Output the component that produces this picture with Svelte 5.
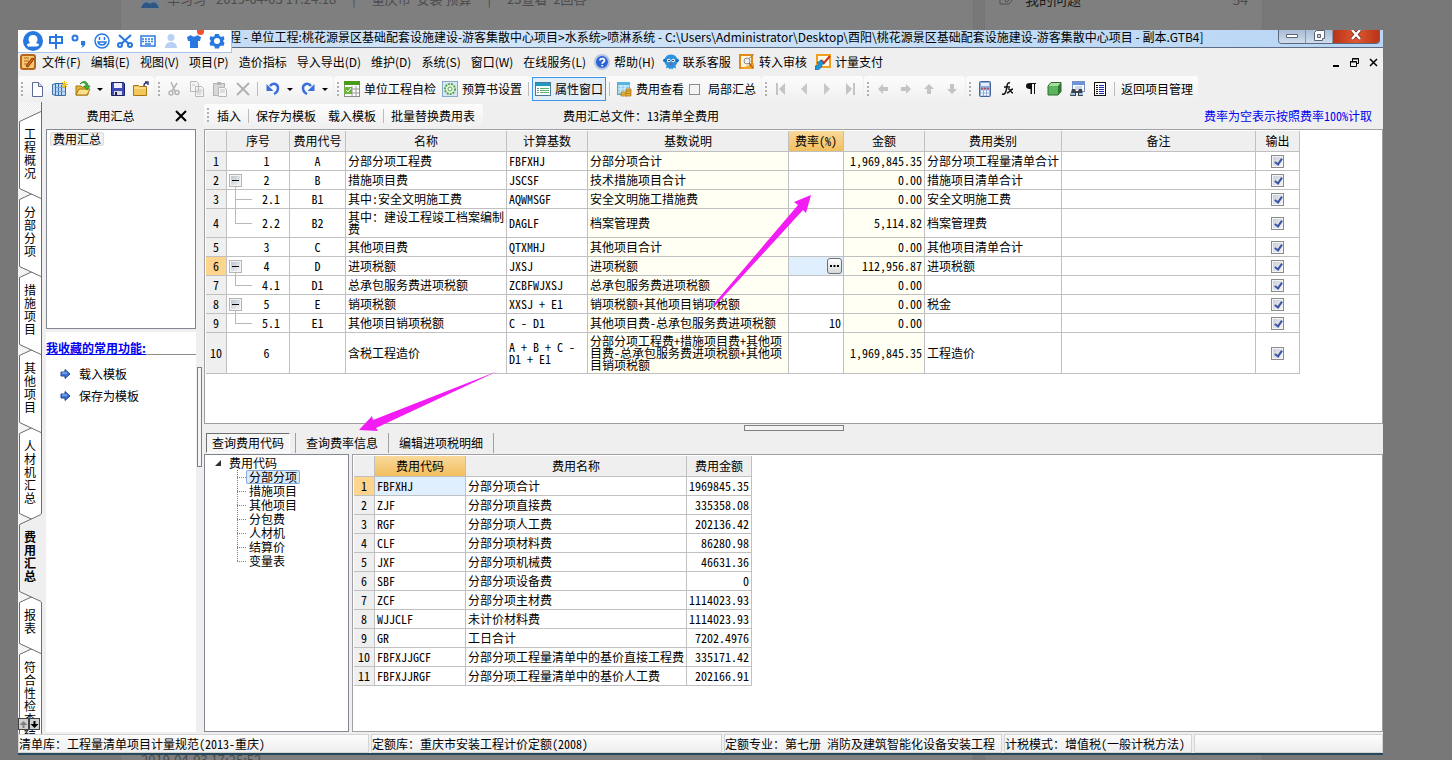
<script lang="ts">
  type Tool = { icon?: string, text?: string, sep?: boolean, caret?: boolean, check?: boolean, active?: boolean, label?: string }

  const icons: Record<string, string> = {
    app: '<rect x="1" y="1" width="14" height="14" rx="2" fill="#f7c873" stroke="#b5651d" stroke-width="2"/><path d="M4 4h5M4 7h5M4 10h4" stroke="#b5651d"/><path d="M6 12 12 4l2 1-6 8z" fill="#e06a10" stroke="#7a3a08"/>',
    help: '<circle cx="8" cy="8" r="7" fill="#2a62d8" stroke="#b8c6e0" stroke-width="2"/><path d="M6 6.500C6 4 10.500 4 10.500 6.500 10.500 8 8.200 8 8.200 9.800M8.200 11v1.600" stroke="#fff" stroke-width="1.800" fill="none"/>',
    service: '<path d="M8 .5c4.500 0 6.500 3 6.500 6.500 0 2-1 3.500-2 4.500l.5 3-2-1-2 2-1-1.500-1 1.500-2-2-2 1 .5-3c-1-1-2-2.500-2-4.500C1.500 3.500 3.500.5 8 .5z" fill="#2b93e0"/><circle cx="1.800" cy="6.500" r="1.800" fill="#1c74c0"/><circle cx="14.200" cy="6.500" r="1.800" fill="#1c74c0"/><circle cx="5.800" cy="6.500" r="1.800" fill="#fff"/><circle cx="10.200" cy="6.500" r="1.800" fill="#fff"/><circle cx="6" cy="6.500" r=".8"/><circle cx="10" cy="6.500" r=".8"/><path d="M6.500 10h3" stroke="#d33"/>',
    audit: '<rect x="1" y="1" width="12" height="13" fill="#fff6dd" stroke="#e08a1a" stroke-width="2"/><path d="M1 15h14V9z" fill="#f5a623"/><circle cx="8" cy="7" r="3" fill="#e9f2fa" stroke="#8a8a8a"/><path d="m10 9 4 5" stroke="#b5651d" stroke-width="2"/><path d="m9 5 6-4.500" stroke="#888"/>',
    pay: '<rect x="2" y="1" width="13" height="12" fill="#fffbe8" stroke="#f0a020" stroke-width="2"/><path d="m15 2-6 7-3-3" stroke="#c8321e" stroke-width="2" fill="none"/><path d="M0 12c2 0 4-1 4-3H2l4-3 3 4H7c0 4-3 6-7 6z" fill="#1a9be0" stroke="#0c5c94" stroke-width=".7"/>',
    file: '<path d="M3.500 1.500h6l4 4v10h-10z" fill="#fff" stroke="#5a6c94"/><path d="M9.500 1.500v4h4" fill="#d4def0" stroke="#5a6c94"/>',
    book: '<path d="M.5 3.500 3.500 2.500v12l-3-1zM3.500 2.500h10v12h-10z" fill="#bcd8f4" stroke="#3a6ea8"/><path d="M6.500 3v11M9.500 3v11" stroke="#3a6ea8"/><path d="M4 6.500h9M4 10.500h9" stroke="#7ca8d8"/><path d="M12.500 0v7M9 3.500h7M10 1l5 5M15 1l-5 5" stroke="#f2c21a"/>',
    open: '<path d="M1 5h5l1 1h6v8H1z" fill="#e8b83a" stroke="#a87410"/><path d="M1 14 4 8h11l-3 6z" fill="#fbe08a" stroke="#a87410"/><path d="M5 3c4-3 6 0 6 2H9l3 4 3-4h-2c0-5-5-6-8-2z" fill="#3cba34" stroke="#1b7a18" stroke-width=".7"/>',
    save: '<path d="M1.500 1.500h12l1 1v12h-13z" fill="#3c4cb4" stroke="#1c2468"/><path d="M4 2h8v5H4z" fill="#eef"/><path d="M4 10h8v4H4z" fill="#d8dcec"/><path d="M5 11h2v3H5z" fill="#223"/>',
    folder: '<path d="M.5 4.500h5l1 1h7v9H.5z" fill="#f3c85a" stroke="#a87410"/><path d="M1 7h12" stroke="#fdf0bc"/><path d="M11 5c0-3 1-3 3-3m-2-1h3v3" stroke="#333c70" stroke-width="1.500" fill="none"/>',
    cut: '<path d="m5 1 4 9M11 2 6 10" stroke="#b4b4b4" stroke-width="1.500"/><circle cx="5" cy="12" r="2" fill="none" stroke="#b4b4b4" stroke-width="1.500"/><circle cx="11" cy="11.500" r="2" fill="none" stroke="#b4b4b4" stroke-width="1.500"/>',
    copy: '<path d="M1.500.5h6l2 2v8h-8zM6.500 5.500h6l2 2v8h-8z" fill="#f4f4f4" stroke="#b8b8b8"/><path d="M8 9h5M8 11h5M8 13h4M3 4h3" stroke="#c4c4c4"/>',
    paste: '<rect x="1.500" y="2.500" width="11" height="12" fill="#d8d8d8" stroke="#b4b4b4"/><path d="M5 1h4v3H5z" fill="#b4b4b4"/><path d="M6.500 6.500h6l2 2v7h-8z" fill="#f6f6f6" stroke="#b8b8b8"/><path d="M8 9h5M8 11h5" stroke="#c4c4c4"/>',
    del: '<path d="m2 2 12 12M14 2 2 14" stroke="#b0b0b0" stroke-width="1.800"/>',
    undo: '<path d="M5 5c3-4 8-2 8 2 0 3-2 5-4 6" fill="none" stroke="#3c6edc" stroke-width="2.500"/><path d="M1.500 3v7h7z" fill="#3c6edc"/>',
    redo: '<path d="M11 5C8 1 3 3 3 7c0 3 2 5 4 6" fill="none" stroke="#3c6edc" stroke-width="2.500"/><path d="M14.500 3v7h-7z" fill="#3c6edc"/>',
    check: '<rect x=".5" y=".5" width="15" height="15" fill="#fff" stroke="#8a8a8a"/><path d="M0 0h16v4H0z" fill="#4a9a1c"/><path d="M1 8h14M1 12h14M8 5v10M12 5v10" stroke="#999"/><path d="M0 6h8v7H0z" fill="#6cb43c"/><path d="m2 9 2 2 3-4" stroke="#fff" fill="none"/>',
    gear: '<rect x=".5" y=".5" width="15" height="15" fill="#d8e8f8" stroke="#88a8cc"/><circle cx="8" cy="8" r="5" fill="#e8f6e4" stroke="#58a84c" stroke-width="2" stroke-dasharray="2 1"/><circle cx="8" cy="8" r="2" fill="#fff" stroke="#58a84c"/>',
    prop: '<rect x=".5" y="1.500" width="15" height="13" fill="#fff" stroke="#4a7a94"/><path d="M1 2h14v3H1z" fill="#1c9cc4"/><path d="M2 7.500h2M2 9.500h2M2 11.500h2" stroke="#888"/><path d="M5 7.500h9M5 9.500h9M5 11.500h9" stroke="#58b46c"/>',
    view: '<rect x="1.500" y="1.500" width="12" height="12" fill="#8cccec" stroke="#58a4d0"/><path d="M2 5h12M2 8h12M2 11h12M5 1v12M9 1v12" stroke="#e4f4fc"/><path d="M1 1h13v3H1z" fill="#58b4e0"/><path d="M5 11h6v4H5z" fill="#f4c44c" stroke="#a87410" stroke-width=".7"/><path d="M10 8h5v7h-5z" fill="#e8b03c" stroke="#a87410" stroke-width=".7"/><path d="M10 10h5M10 12.500h5M5 13h5" stroke="#a87410" stroke-width=".7"/>',
    first: '<path d="M3 2h2v12H3zM12 2v12L6 8z" fill="#c4c4c4"/>',
    prev: '<path d="M11 2v12L5 8z" fill="#c8c8c8"/>',
    next: '<path d="M5 2v12l6-6z" fill="#c8c8c8"/>',
    last: '<path d="M11 2h2v12h-2zM4 2v12l6-6z" fill="#c4c4c4"/>',
    left: '<path d="m3 8 5-5v3h5v4H8v3z" fill="#c4c4c4"/>',
    right: '<path d="M13 8 8 3v3H3v4h5v3z" fill="#c4c4c4"/>',
    up: '<path d="m8 3 5 5h-3v5H6V8H3z" fill="#c4c4c4"/>',
    down: '<path d="M8 13 3 8h3V3h4v5h3z" fill="#c4c4c4"/>',
    calc: '<rect x="2.500" y=".5" width="11" height="15" rx="1" fill="#8cacdc" stroke="#4464a0"/><path d="M4 2h8v3H4z" fill="#e4eefa"/><path d="M4 7.500h8" stroke="#d04040" stroke-width="1.500" stroke-dasharray="2 1"/><path d="M4 10.500h8M4 13.500h8" stroke="#fff" stroke-width="2" stroke-dasharray="2 1"/>',
    fx: '<path d="M10 2C7 1 7 5 6.500 8S5 14 2 13M4 6h6M8 8c3-1 2 4 5 4M13 8c-2 0-4 4-6 4" fill="none" stroke="#111" stroke-width="1.500"/>',
    para: '<path d="M3 5c0-2 1-3 4-3h6v1h-1v10h-1V3H9v10H7.500V8C4 8 3 7 3 5z" fill="#111"/>',
    cube: '<path d="m2 5 3-3.500h10L12 5z" fill="#a8dca0"/><path d="M12 5 15 1.500v9L12 14z" fill="#2c7c30"/><path d="M2 5h10v9H2z" fill="#5cb45c"/><path d="m2 5 3-3.500h10v9L12 14H2z" fill="none" stroke="#2c6c30"/>',
    find: '<rect x="3.500" y=".5" width="12" height="10" fill="#fff" stroke="#7c94c4"/><path d="M3 1h13v3H3z" fill="#6c94dc"/><path d="M6 6h7M6 8h7" stroke="#9cb4dc"/><path d="M3 8h3l1 2h2l1-2h3l1 7h-5v-3H7v3H1z" fill="#3c444c"/><path d="M2 13h4M10 13h4" stroke="#9cc4ec" stroke-width="2"/>',
    list: '<rect x="2.500" y="1.500" width="11" height="13" fill="#fff" stroke="#111"/><path d="M4 4.500h2M4 6.500h2M4 8.500h2M4 10.500h2M4 12.500h2" stroke="#111"/><path d="M7 4.500h5M7 6.500h5M7 8.500h5M7 10.500h5M7 12.500h5" stroke="#1c24b4"/>',
    go: '<path d="M3 6h4V3.500L12 8l-5 4.500V10H3z" fill="#3c74dc" stroke="#1c4494"/><path d="M4 7h5" stroke="#a4c8f8"/>'
  }

  const ime: Record<string, string> = {
    账号: '<circle cx="10" cy="10" r="10" fill="#2878e0"/><path d="M10 4c3 0 4.500 2 4.500 4.500 0 1.500-.5 2-1.500 3.500 2 .5 3 1 3 2 0 1.500-3 1.500-6 1.500s-6 0-6-1.500c0-1 1-1.500 3-2-1-1.500-1.500-2-1.500-3.500C5.500 6 7 4 10 4z" fill="#fff"/>',
    中英: '<path d="M4 6h12v6H4zM10 3v15" fill="none" stroke="#2878e0" stroke-width="2"/>',
    标点: '<circle cx="6" cy="7" r="2.500" fill="none" stroke="#2878e0" stroke-width="2"/><path d="M12 10h4c1 4-1 6-4 7 1-1 2-2 1-3h-1z" fill="#2878e0"/>',
    表情: '<circle cx="10" cy="10" r="7" fill="none" stroke="#2878e0" stroke-width="1.500"/><path d="M6 11c1 4 7 4 8 0zM7.500 6v3M12.500 6v3" fill="none" stroke="#2878e0" stroke-width="1.500"/>',
    截图: '<path d="m4 4 10 9M16 4 6 13" stroke="#2878e0" stroke-width="2"/><circle cx="5" cy="14" r="2" fill="none" stroke="#2878e0" stroke-width="2"/><circle cx="15" cy="14" r="2" fill="none" stroke="#2878e0" stroke-width="2"/>',
    键盘: '<rect x="3" y="5" width="14" height="10" fill="none" stroke="#2878e0" stroke-width="1.500"/><path d="M4 8h12M4 10.500h12" stroke="#2878e0" stroke-width="1.500" stroke-dasharray="2 1"/><path d="M7 13h6" stroke="#2878e0" stroke-width="1.500"/>',
    用户: '<circle cx="10" cy="6.500" r="3.500" fill="#b8d0f4"/><path d="M4 17c0-8 12-8 12 0z" fill="#b8d0f4"/>',
    皮肤: '<path d="M3 6 7 4c1 2 5 2 6 0l4 2-1 4h-2v7H6v-7H4z" fill="#2878e0"/>',
    设置: '<path d="M8 3h4l.5 2 2 1 2-1 1 3-1.500 2L17.500 12l-1 3-2-.5-2 1-.5 2H8l-.5-2-2-1-2 .5-1-3L4 10 2.500 8l1-3 2 1 2-1z" fill="#2878e0"/><circle cx="10" cy="10" r="3" fill="#fff"/>'
  }

  const menus = ['文件(F)', '编辑(E)', '视图(V)', '项目(P)', '造价指标', '导入导出(D)', '维护(D)', '系统(S)', '窗口(W)', '在线服务(L)']
  const iconMenus = [['help', '帮助(H)'], ['service', '联系客服'], ['audit', '转入审核'], ['pay', '计量支付']]

  const toolGroups: Tool[][] = [
    [{ icon: 'file', label: '新建' }, { icon: 'book', label: '新建工程' }, { icon: 'open', label: '打开', caret: true }, { icon: 'save', label: '保存' }, { icon: 'folder', label: '另存为' }],
    [{ icon: 'cut', label: '剪切' }, { icon: 'copy', label: '复制' }, { icon: 'paste', label: '粘贴' }, { icon: 'del', label: '删除' }, { sep: true }, { icon: 'undo', label: '撤销', caret: true }, { icon: 'redo', label: '恢复', caret: true }],
    [{ icon: 'check', text: '单位工程自检' }, { icon: 'gear', text: '预算书设置' }, { sep: true }, { icon: 'prop', text: '属性窗口', active: true }, { sep: true }, { icon: 'view', text: '费用查看' }, { check: true, text: '局部汇总' }],
    [{ icon: 'first', label: '首条' }, { icon: 'prev', label: '上一条' }, { icon: 'next', label: '下一条' }, { icon: 'last', label: '末条' }],
    [{ icon: 'left', label: '左移' }, { icon: 'right', label: '右移' }, { icon: 'up', label: '上移' }, { icon: 'down', label: '下移' }],
    [{ icon: 'calc', label: '计算器' }, { icon: 'fx', label: '函数' }, { icon: 'para', label: '特殊符号' }, { icon: 'cube', label: '图元' }, { icon: 'find', label: '查找' }, { icon: 'list', label: '列表' }, { sep: true }, { text: '返回项目管理' }]
  ]

  const sideTabs = ['工程概况', '分部分项', '措施项目', '其他项目', '人材机汇总', '费用汇总', '报表', '符合性检查结果']
  const activeTab = 5
  const tabHeight = (name: string) => 36 + 13 * name.length

  // tree: 'open' has a toggle, 'mid' and 'end' are its children
  const fees = [
    { no: '1', code: 'A', name: '分部分项工程费', base: 'FBFXHJ', desc: '分部分项合计', rate: '', sum: '1,969,845.35', kind: '分部分项工程量清单合计', tree: '', h: 19 },
    { no: '2', code: 'B', name: '措施项目费', base: 'JSCSF', desc: '技术措施项目合计', rate: '', sum: '0.00', kind: '措施项目清单合计', tree: 'open', h: 19 },
    { no: '2.1', code: 'B1', name: '其中:安全文明施工费', base: 'AQWMSGF', desc: '安全文明施工措施费', rate: '', sum: '0.00', kind: '安全文明施工费', tree: 'mid', h: 19 },
    { no: '2.2', code: 'B2', name: '其中：建设工程竣工档案编制费', base: 'DAGLF', desc: '档案管理费', rate: '', sum: '5,114.82', kind: '档案管理费', tree: 'end', h: 29 },
    { no: '3', code: 'C', name: '其他项目费', base: 'QTXMHJ', desc: '其他项目合计', rate: '', sum: '0.00', kind: '其他项目清单合计', tree: '', h: 19 },
    { no: '4', code: 'D', name: '进项税额', base: 'JXSJ', desc: '进项税额', rate: '', sum: '112,956.87', kind: '进项税额', tree: 'open', h: 19 },
    { no: '4.1', code: 'D1', name: '总承包服务费进项税额', base: 'ZCBFWJXSJ', desc: '总承包服务费进项税额', rate: '', sum: '0.00', kind: '', tree: 'end', h: 19 },
    { no: '5', code: 'E', name: '销项税额', base: 'XXSJ + E1', desc: '销项税额+其他项目销项税额', rate: '', sum: '0.00', kind: '税金', tree: 'open', h: 19 },
    { no: '5.1', code: 'E1', name: '其他项目销项税额', base: 'C - D1', desc: '其他项目费-总承包服务费进项税额', rate: '10', sum: '0.00', kind: '', tree: 'end', h: 19 },
    { no: '6', code: '', name: '含税工程造价', base: 'A + B + C - D1 + E1', desc: '分部分项工程费+措施项目费+其他项目费-总承包服务费进项税额+其他项目销项税额', rate: '', sum: '1,969,845.35', kind: '工程造价', tree: '', h: 41 }
  ]
  const current = 5

  const queryTabs = ['查询费用代码', '查询费率信息', '编辑进项税明细']
  const codeTree = ['分部分项', '措施项目', '其他项目', '分包费', '人材机', '结算价', '变量表']

  const codes = [
    ['FBFXHJ', '分部分项合计', '1969845.35'],
    ['ZJF', '分部分项直接费', '335358.08'],
    ['RGF', '分部分项人工费', '202136.42'],
    ['CLF', '分部分项材料费', '86280.98'],
    ['JXF', '分部分项机械费', '46631.36'],
    ['SBF', '分部分项设备费', '0'],
    ['ZCF', '分部分项主材费', '1114023.93'],
    ['WJJCLF', '未计价材料费', '1114023.93'],
    ['GR', '工日合计', '7202.4976'],
    ['FBFXJJGCF', '分部分项工程量清单中的基价直接工程费', '335171.42'],
    ['FBFXJJRGF', '分部分项工程量清单中的基价人工费', '202166.91']
  ]
</script>

{#snippet icon(name: string)}
  <svg width="16" height="16" viewBox="0 0 16 16" aria-hidden="true">{@html icons[name]}</svg>
{/snippet}

<div class="screen">
  <div class="backdrop">
    <div class="post">
      <div class="meta">
        <svg width="18" height="18" viewBox="0 0 18 18" aria-hidden="true"><path d="M0 0h18v18H0z" fill="#70808c" /><path d="M0 17c2-5 5-7 9-4 4-3 7-1 9 4z" fill="#2c5684" /></svg>
        <span class="who">华习习</span><span class="when">2019-04-03 17:24:18</span><span class="bar">|</span>
        <span>重庆市&nbsp; 安装 预算</span><span class="bar">|</span><span>23查看&nbsp; 2回答</span>
      </div>
      <div class="later">2019-04-03 17:25:52</div>
    </div>
    <div class="mine">
      <svg width="16" height="16" viewBox="0 0 16 16" aria-hidden="true"><path d="M1 2v11h9l4-5M6 10l7-8 2 2-7 7z" fill="none" stroke="#4c5054" /></svg>
      <span>我的问题</span><span class="count">54</span>
    </div>
  </div>

  <div class="window">
    <header class="titlebar">
      <span class="caption">程 - 单位工程:桃花源景区基础配套设施建设-游客集散中心项目&gt;水系统&gt;喷淋系统 - C:\Users\Administrator\Desktop\酉阳\桃花源景区基础配套设施建设-游客集散中心项目 - 副本.GTB4]</span>
      <div class="winbtns">
        <button aria-label="最小化"><svg width="14" height="10" viewBox="0 0 14 10"><path d="M1.500 4.500h11v3h-11z" fill="#fff" stroke="#5c6474" /></svg></button>
        <button aria-label="还原"><svg width="14" height="12" viewBox="0 0 14 12"><path d="M4.500.5h8v8h-2v2h-8v-8z" fill="#fff" stroke="#5c6474" /><path d="M5.500 4.500h3v3h-3z" fill="#c4d4e4" stroke="#5c6474" /></svg></button>
        <button class="close" aria-label="关闭"><svg width="14" height="12" viewBox="0 0 14 12"><path d="m3 0 8 9M11 0 3 9" stroke="#6c2c24" stroke-width="4" /><path d="m3 0 8 9M11 0 3 9" stroke="#fff" stroke-width="2.500" /></svg></button>
      </div>
    </header>

    <div class="ime">
      {#each Object.entries(ime) as [name, shape]}
        <button aria-label={name}>
          <svg width="20" height="20" viewBox="0 0 20 20">{@html shape}</svg>
          {#if name === '皮肤'}<i class="dot"></i>{/if}
        </button>
      {/each}
    </div>

    <nav class="menubar">
      {@render icon('app')}
      {#each menus as menu}
        <button>{menu}</button>
      {/each}
      {#each iconMenus as [name, text]}
        <button class="pic">{@render icon(name)}{text}</button>
      {/each}
      <div class="mdi">
        <button aria-label="最小化子窗口"><svg width="11" height="11" viewBox="0 0 11 11"><path d="M3 9h6" stroke="#000" stroke-width="2" /></svg></button>
        <button aria-label="还原子窗口"><svg width="11" height="11" viewBox="0 0 11 11"><path d="M3.500 4V1.500h6v5H7M3 2h7M1.500 4.500h6v5h-6zM1 5h7" fill="none" stroke="#000" /></svg></button>
        <button aria-label="关闭子窗口"><svg width="11" height="11" viewBox="0 0 11 11"><path d="m2 2 7 7M9 2 2 9" stroke="#000" stroke-width="1.500" /></svg></button>
      </div>
    </nav>

    <div class="toolbar">
      {#each toolGroups as group}
        <div class="group">
          <i class="grip"></i>
          {#each group as tool}
            {#if tool.sep}
              <i class="sep"></i>
            {:else if tool.check}
              <label class="partial"><input type="checkbox">{tool.text}</label>
            {:else}
              <button class:square={!tool.text} class:active={tool.active} aria-label={tool.label}>
                {#if tool.icon}{@render icon(tool.icon)}{/if}{tool.text ?? ''}
              </button>
              {#if tool.caret}<button class="caret" aria-label="{tool.label}选项"></button>{/if}
            {/if}
          {/each}
        </div>
      {/each}
    </div>

    <main>
      <nav class="side">
        {#each sideTabs as tab, i}
          {@const h = tabHeight(tab)}
          <button class="tab" class:active={i === activeTab} style="height: {h}px; z-index: {i === activeTab ? 20 : 10 - i}">
            <svg width="24" height={h} aria-hidden="true">
              <path d="M23 .5 1.500 10.500v{h - 21}L23 {h - .5}z" fill={i === activeTab ? '#efefef' : '#fff'} stroke="none" />
              <path d="M23 .5 1.500 10.500v{h - 21}L23 {h - .5}" fill="none" stroke="#6c6c6c" />
            </svg>
            <span>{tab}</span>
          </button>
        {/each}
        <div class="scroll">
          <button aria-label="向上"><svg width="9" height="9" viewBox="0 0 9 9"><path d="m4.500 1 4 4h-3v3h-2V5h-3z" fill="#808080" /></svg></button>
          <button aria-label="向下"><svg width="9" height="9" viewBox="0 0 9 9"><path d="m4.500 8 4-4h-3V1h-2v3h-3z" fill="#000" /></svg></button>
        </div>
      </nav>

      <aside>
        <div class="paneltitle">
          <span>费用汇总</span>
          <button aria-label="关闭面板"><svg width="12" height="12" viewBox="0 0 12 12"><path d="m1 1 10 10M11 1 1 11" stroke="#000" stroke-width="2" /></svg></button>
        </div>
        <div class="sheets"><button>费用汇总</button></div>
        <div class="favs">
          <h2>我收藏的常用功能:</h2>
          <button>{@render icon('go')}载入模板</button>
          <button>{@render icon('go')}保存为模板</button>
        </div>
      </aside>

      <div class="vsplit"><i></i></div>

      <section class="work">
        <div class="subbar">
          <div class="group">
            <i class="grip"></i>
            <button>插入</button>
            <i class="sep"></i>
            <button>保存为模板</button>
            <button>载入模板</button>
            <i class="sep"></i>
            <button>批量替换费用表</button>
          </div>
          <span class="filename">费用汇总文件：13清单全费用</span>
          <span class="hint">费率为空表示按照费率100%计取</span>
        </div>

        <div class="frame">
          <table class="fees">
            <colgroup>
              <col class="w21"><col class="w63"><col class="w56"><col class="w161"><col class="w81"><col class="w201"><col class="w55"><col class="w81"><col class="w137"><col class="w194"><col class="w44">
            </colgroup>
            <thead>
              <tr>
                <th></th><th>序号</th><th>费用代号</th><th>名称</th><th>计算基数</th><th>基数说明</th><th class="hot">费率(%)</th><th>金额</th><th>费用类别</th><th>备注</th><th>输出</th>
              </tr>
            </thead>
            <tbody>
              {#each fees as fee, i}
                <tr style="height: {fee.h}px">
                  <th class:mark={i === current}>{i + 1}</th>
                  <td class="no">
                    <div>
                      {#if fee.tree === 'open'}
                        <span class="node"><button class="toggle" aria-label="折叠"></button></span>
                      {:else if fee.tree}
                        <svg width="26" height={fee.h - 1} aria-hidden="true">
                          <path d="M8.500 0V{fee.tree === 'mid' ? fee.h : (fee.h - 1) >> 1}M8 {((fee.h - 1) >> 1) + .5}h17" fill="none" stroke="#b8b8b8" />
                        </svg>
                      {:else}
                        <i></i>
                      {/if}
                      <span class="label">{fee.no}</span>
                    </div>
                  </td>
                  <td class="mid">{fee.code}</td>
                  <td class="name">{fee.name}</td>
                  <td class="code">{fee.base}</td>
                  <td class="calc desc">{fee.desc}</td>
                  <td class="num" class:cell={i === current}>
                    {#if i === current}
                      <button class="more" aria-label="选择费率"><svg width="9" height="2" viewBox="0 0 9 2"><path d="M0 0h2v2H0zM3.500 0h2v2h-2zM7 0h2v2H7z" /></svg></button>
                    {:else}
                      {fee.rate}
                    {/if}
                  </td>
                  <td class="num calc">{fee.sum}</td>
                  <td>{fee.kind}</td>
                  <td></td>
                  <td class="mid"><input type="checkbox" checked aria-label="输出 {fee.no}"></td>
                </tr>
              {/each}
            </tbody>
          </table>
        </div>

        <div class="hsplit"><i></i></div>

        <div class="tabs">
          {#each queryTabs as tab, i}
            <button class:on={i === 0}>{tab}</button>
            <i></i>
          {/each}
        </div>

        <div class="lower">
          <div class="tree">
            <div class="root"><i></i>费用代码</div>
            <ul>
              {#each codeTree as node, i}
                <li><button class:picked={i === 0}>{node}</button></li>
              {/each}
            </ul>
          </div>
          <div class="frame">
            <table class="codes">
              <colgroup><col class="w21"><col class="w91"><col class="w221"><col class="w65"></colgroup>
              <thead>
                <tr><th></th><th class="hot">费用代码</th><th>费用名称</th><th>费用金额</th></tr>
              </thead>
              <tbody>
                {#each codes as [code, name, sum], i}
                  <tr>
                    <th class:mark={i === 0}>{i + 1}</th>
                    <td class:cell={i === 0}>{code}</td>
                    <td>{name}</td>
                    <td class="num">{sum}</td>
                  </tr>
                {/each}
              </tbody>
            </table>
          </div>
        </div>
      </section>
    </main>

    <footer>
      <span class="lib">清单库：工程量清单项目计量规范(2013-重庆)</span>
      <span class="lib">定额库：重庆市安装工程计价定额(2008)</span>
      <span class="major">定额专业：第七册 消防及建筑智能化设备安装工程</span>
      <span class="mode">计税模式：增值税(一般计税方法)</span>
      <span class="rest"></span>
    </footer>

    <svg class="arrows" width="820" height="440" viewBox="0 0 820 440" aria-hidden="true">
      <path d="M811 195 794 202 798 205 713 305 715 306 803 210 806 213z" fill="#f41cf4" />
      <path d="M359 430 372 416 373 420 498 371 376 428 378 431z" fill="#f41cf4" />
    </svg>
  </div>
</div>

<style>
  :global(body) {
    background: #787878;
  }

  .screen {
    position: relative;
    box-sizing: border-box;
    min-height: 100vh;
    padding: 30px 69px 5px 18px;
    display: flex;
    overflow: hidden;
    font: 12px/14px "Noto Sans CJK SC", sans-serif;
    color: #000;
  }

  button {
    margin: 0;
    padding: 0;
    border: 0;
    background: none;
    font: inherit;
    color: inherit;
    white-space: nowrap;
  }

  svg {
    display: block;
    flex: none;
  }

  i {
    flex: none;
  }

  .backdrop {
    position: absolute;
    inset: 0 189px 0 120px;
    display: flex;
    gap: 10px;
    color: #4c4c4c;
  }

  .post, .mine {
    background: #7f7f7f;
    border: solid #757575;
    border-width: 0 1px;
    box-sizing: border-box;
  }

  .post {
    flex: 1;
    display: flex;
    flex-direction: column;
    justify-content: space-between;
    padding: 0 20px;
    overflow: hidden;
    font-size: 13px;
  }

  .meta {
    display: flex;
    margin-top: -9px;
    line-height: 16px;
  }

  .who { margin-left: 8px; }
  .when { margin-left: 10px; }
  .bar { margin: 0 16px; }

  .later {
    height: 7px;
    line-height: 14px;
  }

  .mine {
    width: 279px;
    display: flex;
    gap: 10px;
    padding: 0 14px;
    font-size: 14px;
    line-height: 16px;
    color: #1c1c1c;
  }

  .mine > * {
    margin-top: -9px;
  }

  .count {
    margin-left: auto;
    color: #4c4c4c;
  }

  .window {
    position: relative;
    flex: 1;
    min-width: 0;
    display: flex;
    flex-direction: column;
    background: #efefef;
  }

  .titlebar {
    height: 17px;
    display: flex;
    justify-content: space-between;
    border-bottom: 1px solid #5c6c84;
    background: linear-gradient(90deg, #b4d0ee, #d4e6f8 30%, #c8dff6 60%, #b8d6f4);
    overflow: hidden;
  }

  .caption {
    padding-left: 211px;
    line-height: 14px;
    white-space: nowrap;
  }

  .winbtns {
    display: flex;
    height: 13px;
    margin-right: 3px;
    border: 1px solid #5c6880;
    border-top: 0;
    border-radius: 0 0 4px 4px;
    overflow: hidden;
  }

  .winbtns button {
    width: 27px;
    display: flex;
    justify-content: center;
    border-right: 1px solid #8894a8;
    box-sizing: border-box;
    background: linear-gradient(#a8bcd4, #d0deee);
  }

  .winbtns .close {
    width: 46px;
    border: 0;
    background: linear-gradient(90deg, #b83418, #e05830, #b83418);
  }

  .ime {
    position: absolute;
    z-index: 2;
    top: 0;
    left: 0;
    width: 214px;
    height: 23px;
    display: flex;
    gap: 3px;
    padding-left: 5px;
    box-sizing: border-box;
    border: solid #a8c4ec;
    border-width: 0 1px 1px 0;
    background: #fff;
    overflow: hidden;
  }

  .ime button {
    position: relative;
  }

  .dot {
    position: absolute;
    top: -2px;
    right: 0;
    width: 7px;
    height: 7px;
    border-radius: 50%;
    background: #f0502c;
  }

  .menubar {
    height: 28px;
    display: flex;
    align-items: center;
    gap: 10px;
    padding: 0 4px 0 2px;
  }

  .menubar > svg {
    margin-right: -4px;
  }

  .menubar button {
    display: flex;
    align-items: center;
    gap: 4px;
  }

  .menubar .pic {
    margin-left: -2px;
  }

  .menubar .mdi {
    display: flex;
    gap: 8px;
    margin-left: auto;
  }

  .toolbar {
    height: 26px;
    display: flex;
    gap: 1px;
  }

  .group {
    display: flex;
    align-items: center;
    padding-right: 2px;
    border-radius: 3px;
    background: linear-gradient(#fdfdfd, #efefef);
  }

  .grip {
    width: 2px;
    height: 15px;
    margin: 0 2px 0 3px;
    background: repeating-linear-gradient(#b0b0b0 0 2px, transparent 2px 4px);
  }

  .sep {
    width: 1px;
    height: 14px;
    margin: 0 3px;
    background: #bcbcbc;
  }

  .toolbar button {
    height: 24px;
    display: flex;
    align-items: center;
    justify-content: center;
    gap: 4px;
    padding: 0 3px;
    box-sizing: border-box;
  }

  .toolbar .square {
    width: 23px;
  }

  .toolbar .active {
    padding: 0 2px;
    border: 1px solid #3c94ec;
    background: #e4eef8;
  }

  .toolbar .caret {
    width: 12px;
  }

  .caret::before {
    content: "";
    border: 3px solid transparent;
    border-top-color: #000;
    border-bottom: 0;
  }

  .partial {
    display: flex;
    align-items: center;
    gap: 8px;
    padding: 0 3px 0 2px;
  }

  input {
    appearance: none;
    position: relative;
    width: 13px;
    height: 13px;
    box-sizing: border-box;
    margin: 0;
    border: 1px solid #8c8c8c;
    background: #fff;
  }

  .partial input {
    width: 11px;
    height: 11px;
    background: #f4f4f4;
  }

  td input {
    display: block;
    margin: 0 auto;
    background: linear-gradient(135deg, #c4ccd8, #f6f6f6);
    box-shadow: inset 0 0 0 1px #f4f4f4;
  }

  td input:checked::before {
    content: "";
    position: absolute;
    left: 4px;
    top: 1px;
    width: 3px;
    height: 6px;
    border: solid #3c54a4;
    border-width: 0 2px 2px 0;
    transform: rotate(35deg);
  }

  main {
    flex: 1;
    display: grid;
    grid-template-columns: 28px 150px 8px minmax(0, 1fr);
  }

  .side {
    position: relative;
    width: 24px;
    height: 0;
    min-height: 100%;
    padding-top: 9px;
    box-sizing: border-box;
    overflow: hidden;
    background: conic-gradient(#e8e8e8 25%, #fff 0 50%, #e8e8e8 0 75%, #fff 0) 0 0 / 2px 2px;
    box-shadow: inset -1px 0 #6c6c6c;
  }

  .tab {
    position: relative;
    width: 24px;
    display: grid;
    place-items: center;
    margin-bottom: -10px;
    border-right: 1px solid #6c6c6c;
    clip-path: inset(0);
  }

  .tab.active {
    border-color: #efefef;
    font-weight: bold;
  }

  .tab svg, .tab span {
    grid-area: 1 / 1;
  }

  .tab span {
    width: 12px;
    padding-bottom: 5px;
    line-height: 13px;
    white-space: normal;
    word-break: break-all;
  }

  .scroll {
    position: absolute;
    z-index: 30;
    left: 0;
    bottom: 4px;
    display: flex;
  }

  .scroll button {
    width: 11px;
    height: 12px;
    display: grid;
    place-items: center;
    box-sizing: border-box;
    border: 1px solid #404040;
    background: #d0d0d0;
  }

  aside {
    display: flex;
    flex-direction: column;
    padding-bottom: 2px;
  }

  .paneltitle {
    height: 27px;
    display: flex;
    align-items: center;
    padding-right: 9px;
  }

  .paneltitle span {
    flex: 1;
    text-align: center;
  }

  .sheets {
    height: 200px;
    padding: 2px 3px;
    box-sizing: border-box;
    border: 1px solid #828790;
    background: #fff;
  }

  .sheets button {
    display: block;
    height: 14px;
    padding: 0 3px;
    border-radius: 3px;
    box-shadow: inset 0 0 0 1px #dcdcdc;
    background: #f0f0f0;
  }

  .favs {
    flex: 1;
    margin-top: 3px;
    padding-top: 9px;
    background: #fff;
  }

  h2 {
    margin: 0 0 8px;
    border-bottom: 1px solid #8c8c8c;
    font-size: 12px;
    line-height: 13px;
    color: #0000f0;
    text-decoration: underline;
  }

  .favs button {
    display: flex;
    align-items: center;
    gap: 5px;
    height: 22px;
    padding-left: 12px;
  }

  .vsplit {
    padding-top: 265px;
  }

  .vsplit i {
    display: block;
    width: 5px;
    height: 100px;
    margin-left: 1px;
    box-sizing: border-box;
    border: 1px solid #808080;
    background: #f4f4f4;
  }

  .work {
    display: grid;
    grid-template-rows: 27px 295fr 8px 22px 278fr;
    padding-bottom: 2px;
    font-feature-settings: "hwid";
  }

  .subbar {
    display: flex;
    align-items: center;
    padding-right: 11px;
  }

  .subbar .group {
    height: 24px;
  }

  .subbar button {
    padding: 0 6px;
  }

  .subbar .sep {
    margin: 0 1px;
  }

  .filename {
    margin-left: 80px;
  }

  .hint {
    margin-left: auto;
    color: #0000f0;
  }

  .frame {
    padding: 1px;
    border: 1px solid #a0a0a4;
    box-sizing: border-box;
    background: #fff;
    overflow: hidden;
  }

  table {
    table-layout: fixed;
    border-spacing: 0;
    font: inherit;
    line-height: 12px;
  }

  .fees { width: 1094px; }
  .codes { width: 398px; }

  .w21 { width: 21px; }
  .w44 { width: 44px; }
  .w55 { width: 55px; }
  .w56 { width: 56px; }
  .w63 { width: 63px; }
  .w65 { width: 65px; }
  .w81 { width: 81px; }
  .w91 { width: 91px; }
  .w137 { width: 137px; }
  .w161 { width: 161px; }
  .w194 { width: 194px; }
  .w201 { width: 201px; }
  .w221 { width: 221px; }

  thead tr {
    height: 21px;
  }

  tbody tr {
    height: 19px;
  }

  th, td {
    box-sizing: border-box;
    padding: 0 2px;
    border: solid #c0c0c0;
    border-width: 0 1px 1px 0;
    white-space: nowrap;
    text-align: left;
  }

  th {
    padding: 0;
    background: #efefef;
    font-weight: normal;
    text-align: center;
  }

  .name, .desc {
    white-space: normal;
    word-break: break-all;
  }

  .code {
    white-space: normal;
  }

  .name, .code {
    padding-right: 0;
  }

  .hot {
    background: linear-gradient(#f9d99a, #f2bf60);
  }

  .mark {
    background: #ffd48c;
  }

  .cell {
    background: #e0effe;
  }

  .calc {
    background: #fffff4;
  }

  .mid {
    padding: 0;
    text-align: center;
  }

  .num {
    text-align: right;
  }

  .no {
    padding: 0;
  }

  .no div {
    display: flex;
    align-items: center;
  }

  .no i, .node {
    width: 17px;
  }

  .label {
    flex: 1;
    text-align: center;
  }

  /* stub of the branch line under the toggle comes from the gradient */
  .node {
    height: 18px;
    display: grid;
    place-items: center;
    background: linear-gradient(#b8b8b8, #b8b8b8) 8px 100% / 1px 5px no-repeat;
  }

  .toggle {
    width: 13px;
    height: 13px;
    display: grid;
    place-items: center;
    border: 1px solid #b4b4b4;
    box-shadow: inset 0 0 0 1px #f4f4f4;
    background: linear-gradient(135deg, #b8c0cc, #f8f8f8);
    box-sizing: border-box;
  }

  .toggle::before {
    content: "";
    width: 7px;
    height: 1px;
    background: #000;
  }

  .more {
    display: grid;
    place-items: center;
    width: 15px;
    height: 16px;
    margin: 0 -1px 0 auto;
    border: 1px solid #707070;
    border-radius: 3px;
    background: linear-gradient(#fff, #d8d8d8);
    box-sizing: border-box;
  }

  .hsplit i {
    display: block;
    width: 100px;
    height: 6px;
    margin: 1px auto 0;
    box-sizing: border-box;
    border: 1px solid #808080;
    background: #f4f4f4;
  }

  .tabs {
    display: flex;
    align-items: center;
    padding-left: 2px;
  }

  .tabs button {
    height: 20px;
    padding: 0 10px;
  }

  .tabs .on {
    margin-right: 5px;
    padding: 0 5px;
    box-sizing: border-box;
    border: 1px solid #808080;
    border-color: #707070 #fff #fff #707070;
    background: #f6f6f6;
  }

  .tabs i {
    width: 1px;
    height: 20px;
    background: #a0a0a0;
  }

  .lower {
    display: grid;
    grid-template-columns: 145px minmax(0, 1fr);
    gap: 3px;
  }

  .tree {
    padding: 1px 0 0 10px;
    border: 1px solid #828790;
    box-sizing: border-box;
    background: #fff;
  }

  .root {
    display: flex;
    align-items: center;
  }

  .root i {
    margin-right: 8px;
    border: solid transparent;
    border-width: 0 0 6px 6px;
    border-bottom-color: #303030;
  }

  ul {
    margin: 0 0 0 22px;
    padding: 0;
    list-style: none;
  }

  li {
    height: 14px;
    display: flex;
    align-items: center;
    background: repeating-linear-gradient(#808080 0 1px, transparent 1px 2px) 0 0 / 1px 100% no-repeat;
  }

  li:last-child {
    background-size: 1px 7px;
  }

  li::before {
    content: "";
    width: 9px;
    height: 1px;
    background: repeating-linear-gradient(90deg, #808080 0 1px, transparent 1px 2px);
  }

  li button {
    height: 14px;
    padding: 0 3px;
    border-radius: 2px;
    line-height: 14px;
  }

  .picked {
    box-shadow: inset 0 0 0 1px #84acdc;
    background: #dce9fb;
  }

  footer {
    height: 21px;
    display: flex;
    gap: 2px;
    border-bottom: 2px solid #24485c;
    box-sizing: border-box;
    background: #efefef;
    font-feature-settings: "hwid";
  }

  footer span {
    box-sizing: border-box;
    border: 1px solid #d4d4d4;
    background: linear-gradient(#fcfcfc, #efefef);
    line-height: 18px;
    white-space: nowrap;
    overflow: hidden;
  }

  .lib { width: 351px; }
  .major { width: 278px; }
  .mode { width: 188px; }
  .rest { flex: 1; }

  .arrows {
    position: absolute;
    z-index: 3;
    top: -30px;
    left: -18px;
    pointer-events: none;
  }
</style>
